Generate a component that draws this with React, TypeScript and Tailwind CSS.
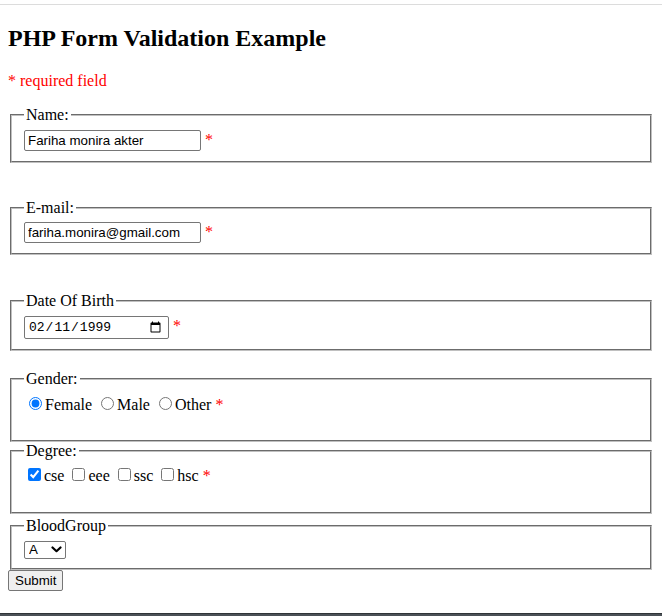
import React from "react";

const fs =
  "mx-[2px] border-2 [border-style:groove] border-[#c0c0c0] px-[12px] pt-[5.6px]";
const lg = "px-[2px]";
const txt =
  "h-[21px] w-[177px] border border-[#767676] rounded-[2px] bg-white px-[3px] font-['Liberation_Sans',sans-serif] text-[13.333px] text-black";
const req = "text-[#ff0000]";
const radio = "mt-[3px] mr-[3px] ml-[5px] mb-0";
const check = "mt-[3px] mr-[3px] ml-[4px] mb-[3px]";

export default function App() {
  return (
    <div className="h-[616px] w-full flex flex-col bg-white text-black font-['Liberation_Serif',serif] text-[16px] leading-[normal]">
      <div className="h-[4px] shrink-0" />
      <div className="h-px shrink-0 bg-[#dcdcdc]" />
      <div className="px-2 flow-root">
        <h2 className="mt-[20px] text-[24px] font-bold">PHP Form Validation Example</h2>
        <p className="mt-[20px] mb-4">
          <span className={req}>* required field</span>
        </p>
        <form>
          <fieldset className={`${fs} pb-[10px]`}>
            <legend className={lg}>Name:</legend>
            <input type="text" className={txt} defaultValue="Fariha monira akter" />{" "}
            <span className={req}>*</span>
          </fieldset>
          <fieldset className={`${fs} pb-[10px] mt-[36px]`}>
            <legend className={lg}>E-mail:</legend>
            <input type="text" className={txt} defaultValue="fariha.monira@gmail.com" />{" "}
            <span className={req}>*</span>
          </fieldset>
          <fieldset className={`${fs} pb-[10px] mt-[37px]`}>
            <legend className={lg}>Date Of Birth</legend>
            <input
              type="date"
              defaultValue="1999-02-11"
              className="h-[23px] w-[145px] border border-[#767676] rounded-[2px] bg-white pl-[3px] pr-[4px] font-['Liberation_Mono',monospace] text-[13px] text-black"
            />{" "}
            <span className={req}>*</span>
          </fieldset>
          <fieldset className={`${fs} pb-[8px] mt-[19.4px]`}>
            <legend className={lg}>Gender:</legend>
            <input type="radio" name="gender" className={radio} defaultChecked />
            Female <input type="radio" name="gender" className={radio} />
            Male <input type="radio" name="gender" className={radio} />
            Other <span className={req}>*</span>
            <br />
            <br />
          </fieldset>
          <fieldset className={`${fs} pb-[9px]`}>
            <legend className={lg}>Degree:</legend>
            <input type="checkbox" className={check} defaultChecked />
            cse <input type="checkbox" className={check} />
            eee <input type="checkbox" className={check} />
            ssc <input type="checkbox" className={check} />
            hsc <span className={req}>*</span>
            <br />
            <br />
          </fieldset>
          <fieldset className={`${fs} pb-[9px] mt-[3px]`}>
            <legend className={lg}>BloodGroup</legend>
            <span className="relative inline-block align-top">
              <select className="block h-[18px] w-[42px] appearance-none border border-[#767676] rounded-[2px] bg-white pl-[4px] font-['Liberation_Sans',sans-serif] text-[13.333px] leading-[16px] text-black">
                <option>A</option>
                <option>B</option>
                <option>AB</option>
                <option>O</option>
              </select>
              <svg
                className="pointer-events-none absolute left-[27px] top-[5px] h-[7px] w-[11px]"
                viewBox="0 0 11 7"
                fill="none"
              >
                <path d="M1.5 1.5 L5.5 5.2 L9.5 1.5" stroke="#000" strokeWidth="2.2" strokeLinecap="round" strokeLinejoin="round" />
              </svg>
            </span>
          </fieldset>
          <button
            type="submit"
            className="h-[21px] border border-[#767676] rounded-[2px] bg-[#efefef] px-[6px] font-['Liberation_Sans',sans-serif] text-[13.333px] text-black"
          >
            Submit
          </button>
        </form>
      </div>
      <div className="mt-auto h-[3px] shrink-0 border-t border-[#303438] bg-[#4b5157]" />
    </div>
  );
}
